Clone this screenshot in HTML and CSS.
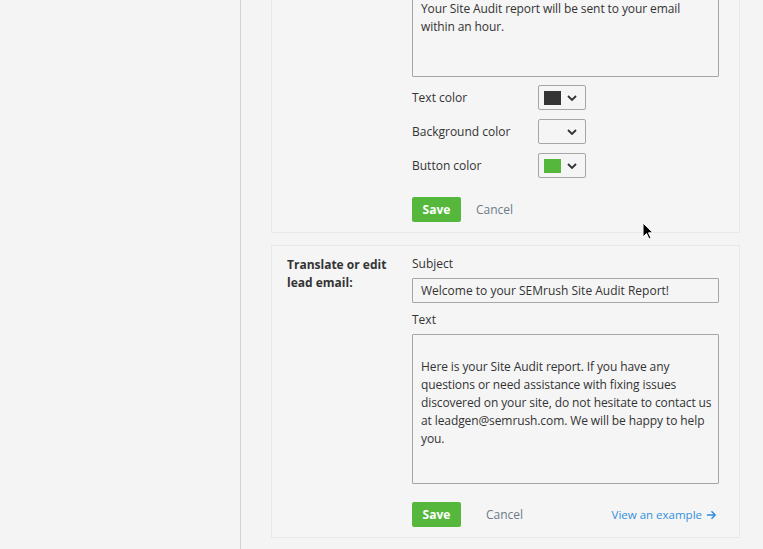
FILE: index.html
```html
<!DOCTYPE html>
<html>
<head>
<meta charset="utf-8">
<link rel="stylesheet" href="styles.css">
</head>
<body>
<div class="layout">
  <aside class="sidebar"></aside>
  <main class="main">
    <section class="card card-first">
      <div class="card-label"></div>
      <div class="card-fields">
        <div class="textarea textarea-short">
Your Site Audit report will be sent to your email within an hour.</div>
        <div class="color-rows">
          <div class="color-row">
            <span class="field-label">Text color</span>
            <span class="color-select"><span class="swatch swatch-dark"></span><svg class="chev" viewBox="0 0 10 6" width="10" height="6"><path d="M1 1l4 4 4-4" fill="none" stroke="#333" stroke-width="1.8"/></svg></span>
          </div>
          <div class="color-row">
            <span class="field-label">Background color</span>
            <span class="color-select"><span class="swatch swatch-none"></span><svg class="chev" viewBox="0 0 10 6" width="10" height="6"><path d="M1 1l4 4 4-4" fill="none" stroke="#333" stroke-width="1.8"/></svg></span>
          </div>
          <div class="color-row">
            <span class="field-label">Button color</span>
            <span class="color-select"><span class="swatch swatch-green"></span><svg class="chev" viewBox="0 0 10 6" width="10" height="6"><path d="M1 1l4 4 4-4" fill="none" stroke="#333" stroke-width="1.8"/></svg></span>
          </div>
        </div>
        <div class="actions">
          <button class="btn-save">Save</button>
          <span class="btn-cancel">Cancel</span>
        </div>
      </div>
    </section>

    <section class="card">
      <div class="card-label">Translate or edit lead email:</div>
      <div class="card-fields">
        <div class="field-label">Subject</div>
        <div class="input">Welcome to your SEMrush Site Audit Report!</div>
        <div class="field-label label-text">Text</div>
        <div class="textarea textarea-tall">
Here is your Site Audit report. If you have any questions or need assistance with fixing issues discovered on your site, do not hesitate to contact us at leadgen@semrush.com. We will be happy to help you.</div>
        <div class="actions actions-last">
          <button class="btn-save">Save</button>
          <span class="btn-cancel btn-cancel-wide">Cancel</span>
          <a class="example-link">View an example <svg viewBox="0 0 12 10" width="11" height="10"><path d="M1 5h9M6 1l4 4-4 4" fill="none" stroke="#2f8fe0" stroke-width="1.6"/></svg></a>
        </div>
      </div>
    </section>
  </main>
</div>
<svg class="cursor" viewBox="0 0 12 18" width="12" height="18"><path d="M1 1v14l3.5-3.5 2.5 5.5 2-1-2.5-5.2H11z" fill="#000" stroke="#fff" stroke-width="1"/></svg>
</body>
</html>
```
FILE: styles.css
```css
html, body {
  margin: 0;
  padding: 0;
  background: #f4f4f4;
  font-family: "Open Sans", "Noto Sans", sans-serif;
  color: #333;
  overflow: hidden;
  height: 549px;
}
.layout {
  display: flex;
  height: 549px;
}
.sidebar {
  width: 240px;
  flex: none;
  border-right: 1px solid #d2d2d2;
}
.main {
  padding-left: 30px;
  margin-top: -69px;
  display: flex;
  flex-direction: column;
  gap: 12px;
}
.card {
  border: 1px solid #e8e8e8;
  background: #f5f5f5;
  display: grid;
  grid-template-columns: 125px 307px;
  padding: 9px 20px 10px 15px;
}
.card-label {
  font-size: 12px;
  font-weight: 700;
  line-height: 18px;
  width: 110px;
  padding-top: 1px;
}
.card-fields {
  display: flex;
  flex-direction: column;
}
.textarea {
  box-sizing: border-box;
  border: 1px solid #a6a6a6;
  border-radius: 1px;
  padding: 6px 3px 6px 8px;
  font-size: 12px;
  line-height: 18px;
  letter-spacing: -0.1px;
  white-space: pre-wrap;
  color: #333;
}
.textarea-short {
  height: 102px;
  margin-top: 34px;
}
.textarea-tall {
  height: 150px;
  padding-top: 5px;
}
.color-rows {
  display: flex;
  flex-direction: column;
  gap: 9px;
  margin-top: 8px;
}
.color-row {
  display: grid;
  grid-template-columns: 126px 48px;
  align-items: center;
}
.field-label {
  font-size: 12px;
  line-height: 18px;
}
.color-select {
  box-sizing: border-box;
  height: 25px;
  width: 48px;
  border: 1px solid #a6a6a6;
  border-radius: 2px;
  display: flex;
  align-items: center;
  padding-left: 5px;
  gap: 6px;
}
.swatch {
  width: 17px;
  height: 14px;
}
.swatch-dark { background: #343434; }
.swatch-green { background: #55b83c; }
.chev { display: block; }
.actions {
  display: flex;
  align-items: center;
  margin-top: 19px;
}
.actions-last {
  margin-top: 18px;
}
.btn-save {
  width: 49px;
  height: 25px;
  border: none;
  border-radius: 2px;
  background: #55b83c;
  color: #fff;
  font-family: inherit;
  font-size: 12px;
  font-weight: 700;
  padding: 0;
}
.btn-cancel {
  margin-left: 15px;
  font-size: 12px;
  color: #6b7b88;
}
.btn-cancel-wide {
  margin-left: 25px;
}
.example-link {
  margin-left: auto;
  margin-right: 2px;
  font-size: 11.5px;
  color: #2f8fe0;
  display: flex;
  align-items: center;
  gap: 4px;
}
.input {
  box-sizing: border-box;
  height: 25px;
  border: 1px solid #a6a6a6;
  border-radius: 1px;
  padding: 0 8px;
  margin-top: 5px;
  font-size: 12px;
  line-height: 23px;
  white-space: nowrap;
}
.label-text {
  margin-top: 8px;
  margin-bottom: 5px;
}
.cursor {
  position: absolute;
  left: 642px;
  top: 222px;
}
```
